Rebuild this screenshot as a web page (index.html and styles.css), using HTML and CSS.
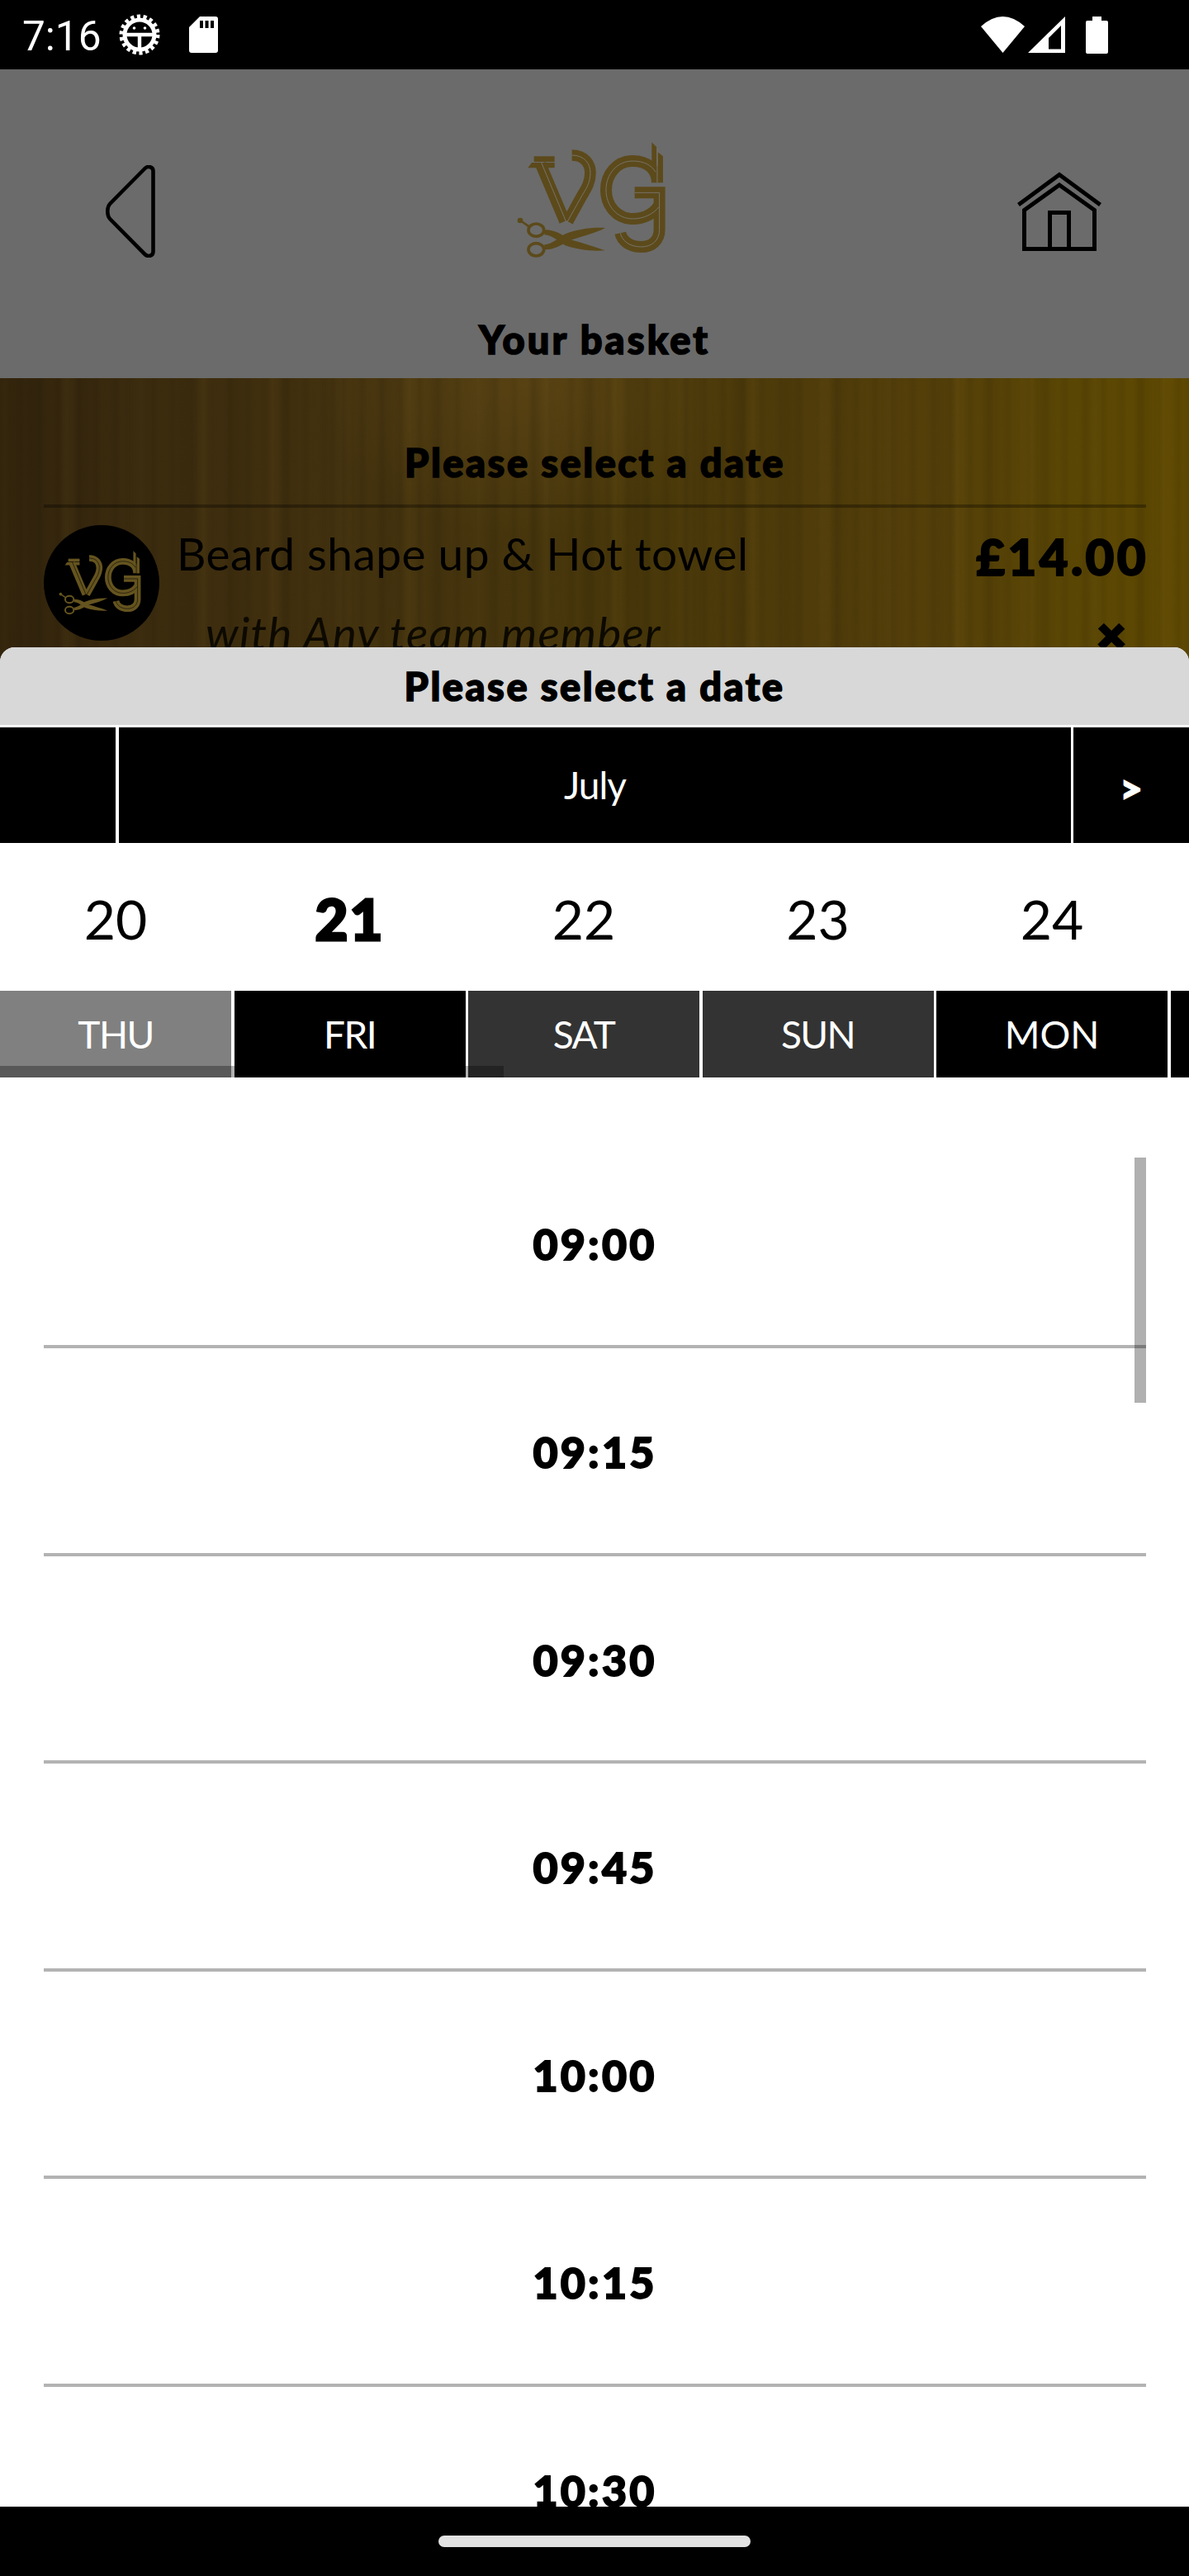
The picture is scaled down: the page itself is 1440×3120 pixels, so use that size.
FILE: index.html
```
<!DOCTYPE html>
<html lang="en">
<head>
    <meta charset="UTF-8">
    <meta name="viewport" content="width=device-width, initial-scale=1.0">
    <title>Your basket</title>
    <link rel="stylesheet" href="styles.css">
</head>
<body>
    <!-- shared logo artwork -->
    <svg class="defs" width="0" height="0">
        <symbol id="logo" viewBox="190 90 580 440">
            <g fill="currentColor">
                <path d="M258 148H333V168H258Z"/>
                <path d="M250 171H333V190H236Z"/>
                <path d="M686 97L704 115V215L686 195Z"/>
                <path d="M708 133L727 148V243H708Z"/>
                <path d="M296 469C325 468 345 445 372 430C415 413 470 405 517 408C480 428 430 440 388 453C355 472 330 488 296 487Z"/>
                <path d="M296 433C325 434 345 457 372 472C415 487 470 494 517 490C480 476 430 462 388 449C355 430 330 414 296 415Z"/>
                <circle cx="208" cy="381" r="10"/>
            </g>
            <g fill="none" stroke="currentColor">
                <path stroke-width="41" d="M282 176L370 384M396 144C442 144 463 175 463 208C463 245 445 270 433 290L381 385"/>
                <path stroke-width="42" d="M706 244C706 195 670 165 617 165C560 165 520 212 520 270C520 328 560 375 617 375C658 375 692 357 712 328"/>
                <path stroke-width="42" d="M624 280H714V415C714 452 688 477 648 477C606 477 578 455 572 427"/>
                <ellipse cx="266" cy="416" rx="28" ry="23" stroke-width="11"/>
                <ellipse cx="266" cy="487" rx="28" ry="23" stroke-width="11"/>
                <path stroke-width="8" d="M208 381L240 403"/>
            </g>
            <g class="inline" fill="none" stroke-width="3">
                <path d="M285 171L375 386M396 144C442 144 463 175 463 208C463 245 445 270 433 290L378 388"/>
                <path d="M706 115V244M700 205C684 178 655 165 617 165C560 165 520 212 520 270C520 328 560 375 617 375C658 375 692 357 712 332"/>
                <path d="M624 280H714V415C714 452 688 477 648 477C606 477 578 455 572 427"/>
            </g>
        </symbol>
    </svg>

    <div class="phone">
        <div class="status-bar">
            <div class="status-left">
                <span class="clock">7:16</span>
                <svg class="gear" viewBox="0 0 50 50">
                    <circle cx="25" cy="25" r="18" fill="none" stroke="#fff" stroke-width="5"/>
                    <circle cx="25" cy="25" r="22" fill="none" stroke="#fff" stroke-width="5" stroke-dasharray="4.2 3.48"/>
                    <path d="M9 25H41M25 25V42" stroke="#fff" stroke-width="4.4"/>
                    <circle cx="18.5" cy="17" r="1.8" fill="#fff"/>
                    <circle cx="31.5" cy="17" r="1.8" fill="#fff"/>
                </svg>
                <svg class="sd" viewBox="0 0 35 44">
                    <path fill="#fff" d="M13 0H32Q35 0 35 3V41Q35 44 32 44H3Q0 44 0 41V13Z"/>
                    <path d="M13 5h4v9h-4zM19.5 5h4v9h-4zM26 5h4v9h-4z"/>
                </svg>
            </div>
            <div class="status-right">
                <svg class="wifi" viewBox="0 0 53 44"><path fill="#fff" d="M0 12Q26.500 -12 53 12L26.500 44Z"/></svg>
                <svg class="signal" viewBox="0 0 45 44"><path fill="#fff" fill-rule="evenodd" d="M45 0V44H0ZM40 11L25 26V39.500H40Z"/></svg>
                <svg class="battery" viewBox="0 0 27 45"><path fill="#fff" d="M8 0H19V5H25Q27 5 27 7V43Q27 45 25 45H2Q0 45 0 43V7Q0 5 2 5H8Z"/></svg>
            </div>
        </div>

        <div class="header">
            <div class="header-row">
                <svg class="back" viewBox="0 0 60 112">
                    <path fill="none" stroke="#000" stroke-width="4.600" d="M57.500 7V105C57.500 110 51 111.500 47.500 108L5.500 65.500C1.200 61 1.200 51 5.500 46.500L47.500 4C51 0.500 57.500 2 57.500 7Z"/>
                </svg>
                <svg class="logo"><use href="#logo"/></svg>
                <svg class="home" viewBox="0 0 104 96">
                    <g fill="none" stroke="#000" stroke-width="5">
                        <path d="M2.500 40L52 3.500L101.500 40"/>
                        <path d="M9.500 93.500V46.500L52 16L94.500 46.500V93.500Z"/>
                        <path d="M40.500 93V49.500H63.500V93"/>
                    </g>
                </svg>
            </div>
            <h1>Your basket</h1>
        </div>

        <div class="basket">
            <h2>Please select a date</h2>
            <div class="item">
                <div class="avatar"><svg><use href="#logo"/></svg></div>
                <div class="item-text">
                    <div class="service">Beard shape up &amp; Hot towel</div>
                    <div class="staff">with Any team member</div>
                </div>
                <div class="item-side">
                    <div class="price">£14.00</div>
                    <div class="remove">×</div>
                </div>
            </div>
        </div>

        <div class="sheet">
            <div class="sheet-title">Please select a date</div>
            <div class="months">
                <div class="prev"></div>
                <div class="month">July</div>
                <div class="next">&gt;</div>
            </div>
            <div class="days">
                <div class="day past"><div class="num">20</div><div class="name">THU</div></div>
                <div class="day selected"><div class="num">21</div><div class="name">FRI</div></div>
                <div class="day weekend"><div class="num">22</div><div class="name">SAT</div></div>
                <div class="day weekend"><div class="num">23</div><div class="name">SUN</div></div>
                <div class="day"><div class="num">24</div><div class="name mon">MON</div></div>
                <div class="day"><div class="num"></div><div class="name"></div></div>
                <div class="scroll-x"></div>
            </div>
            <div class="times">
                <div class="time">09:00</div>
                <div class="time">09:15</div>
                <div class="time">09:30</div>
                <div class="time">09:45</div>
                <div class="time">10:00</div>
                <div class="time">10:15</div>
                <div class="time">10:30</div>
                <div class="scroll-y"></div>
            </div>
        </div>

        <div class="nav-bar"><div class="pill"></div></div>
    </div>
</body>
</html>
```
FILE: styles.css
```
* {
    box-sizing: border-box;
}
body {
    margin: 0;
    background-color: #000;
    font-family: Lato, "Liberation Sans", sans-serif;
    color: #000;
}
svg {
    display: block;
}
.defs {
    position: absolute;
}
.phone {
    width: 1440px;
    height: 3120px;
    display: flex;
    flex-direction: column;
    overflow: hidden;
}

/* status bar */
.status-bar {
    height: 84px;
    background-color: #000;
    display: flex;
    justify-content: space-between;
    padding: 0 98px 0 27px;
    flex-shrink: 0;
}
.status-left, .status-right {
    display: flex;
    align-items: center;
}
.clock {
    color: #fff;
    font-family: Roboto, sans-serif;
    font-size: 49.5px;
    line-height: 84px;
    width: 117px;
    padding-top: 3px;
}
.gear {
    width: 50px;
    height: 50px;
}
.sd {
    width: 35px;
    height: 44px;
    margin-left: 35px;
}
.wifi {
    width: 53px;
    height: 44px;
}
.signal {
    width: 45px;
    height: 44px;
    margin-left: 4px;
}
.battery {
    width: 27px;
    height: 45px;
    margin-left: 25px;
}

/* header */
.header {
    height: 374px;
    padding-top: 86px;
    background-color: #6b6b6b;
    flex-shrink: 0;
}
.header-row {
    display: flex;
    justify-content: space-between;
    align-items: center;
    height: 172px;
    padding: 0 105px 0 128px;
}
.back {
    width: 60px;
    height: 112px;
}
.logo {
    width: 193.3px;
    height: 146.7px;
    margin: 0 0 25px 22px;
    color: #5c4a1b;
    --line: #787367;
}
.inline {
    stroke: var(--line);
}
.home {
    width: 104px;
    height: 96px;
}
h1, h2, .sheet-title {
    margin: 0;
    font-size: 47px;
    font-weight: 900;
    text-align: center;
    letter-spacing: 2.5px;
    -webkit-text-stroke: 1.6px #000;
}
h1 {
    margin-top: 41px;
    letter-spacing: 3.1px;
}

/* basket behind the sheet */
.basket {
    height: 344px;
    flex-shrink: 0;
    padding: 0 52px 0 53px;
    overflow: hidden;
    background:
        repeating-linear-gradient(90deg, rgba(0,0,0,0.05) 0 3px, transparent 8px 17px, rgba(0,0,0,0.04) 23px),
        repeating-linear-gradient(90deg, transparent 0 29px, rgba(0,0,0,0.05) 36px 40px, transparent 61px),
        repeating-linear-gradient(90deg, rgba(255,200,80,0.02) 0 5px, transparent 12px 71px, rgba(255,200,80,0.03) 80px 83px),
        radial-gradient(ellipse 260px 190px at 640px 0, rgba(106,78,26,0.5), transparent),
        linear-gradient(90deg, #32240c 0%, #3b2b0e 12%, #42310e 28%, #47360c 45%, #493809 55%, #4e3b0a 65%, #543f09 78%, #5a4604 90%, #5f4902 100%);
}
h2 {
    height: 157px;
    line-height: 204px;
    border-bottom: 4px solid rgba(0,0,0,0.3);
}
.item {
    display: flex;
    padding-top: 21px;
}
.avatar {
    width: 140px;
    height: 140px;
    border-radius: 50%;
    background-color: #000;
    display: flex;
    align-items: center;
    justify-content: center;
}
.avatar svg {
    width: 107px;
    height: 81px;
    color: #65541f;
    --line: #000;
}
.item-text {
    flex: 1;
    padding-left: 21px;
    white-space: nowrap;
}
.service, .staff {
    font-size: 55px;
    line-height: 96px;
}
.service {
    margin-top: -14px;
    letter-spacing: 0.45px;
}
.staff {
    font-style: italic;
    padding-left: 35px;
    letter-spacing: 1.1px;
    color: #0c0900;
}
.item-side {
    font-weight: 900;
    text-align: right;
}
.price {
    margin-top: -2px;
    font-size: 60px;
    line-height: 80px;
    letter-spacing: 3.4px;
    margin-right: -3px;
    -webkit-text-stroke: 2px #000;
}
.remove {
    padding: 14px 25px 0 0;
    font-size: 58px;
    line-height: 80px;
    -webkit-text-stroke: 4px #000;
}

/* date picker sheet, overlaps the basket so its corners show through */
.sheet {
    flex: 1;
    min-height: 0;
    margin-top: -18px;
    position: relative;
    overflow: hidden;
    background-color: #fff;
    display: flex;
    flex-direction: column;
    border-radius: 18px 18px 0 0;
}
.sheet-title {
    height: 97px;
    line-height: 94px;
    background-color: #d8d8d8;
    border-bottom: 3px solid #fff;
    flex-shrink: 0;
}
.months {
    display: flex;
    height: 140px;
    flex-shrink: 0;
    color: #fff;
    text-align: center;
    line-height: 140px;
}
.months div {
    background-color: #000;
}
.prev {
    width: 140px;
    margin-right: 4px;
}
.month {
    flex: 1;
    font-size: 46px;
    letter-spacing: -1px;
}
.next {
    width: 140px;
    margin-left: 3px;
    padding-top: 4px;
    font-size: 46px;
    font-weight: 900;
    -webkit-text-stroke: 2px #fff;
}
.days {
    position: relative;
    display: flex;
    gap: 3.5px;
    height: 284px;
    overflow: hidden;
    flex-shrink: 0;
}
.day {
    width: 280px;
    flex-shrink: 0;
    text-align: center;
}
.num {
    height: 179px;
    line-height: 183px;
    font-size: 66px;
}
.name {
    height: 105px;
    line-height: 105px;
    font-size: 46px;
    letter-spacing: -1.6px;
    color: #fff;
    background-color: #000;
}
.mon {
    letter-spacing: 0;
}
.past .name {
    background-color: #808080;
}
.weekend .name {
    background-color: #333;
}
.selected .num {
    font-size: 69px;
    font-weight: 900;
    letter-spacing: 2px;
    -webkit-text-stroke: 3px #000;
}
.scroll-x, .scroll-y {
    position: absolute;
    background-color: rgba(0,0,0,0.31);
}
.scroll-x {
    left: 0;
    bottom: 0;
    width: 610px;
    height: 14px;
}
.times {
    position: relative;
    flex: 1;
    padding: 76.4px 52px 0 53px;
    overflow: hidden;
}
.time {
    height: 251.6px;
    line-height: 250px;
    border-bottom: 4px solid #b3b3b3;
    text-align: center;
    font-size: 52px;
    font-weight: 900;
    letter-spacing: 3.2px;
    -webkit-text-stroke: 1.8px #000;
}
.scroll-y {
    right: 52px;
    top: 97px;
    width: 14px;
    height: 297px;
}

/* gesture bar */
.nav-bar {
    height: 84px;
    flex-shrink: 0;
    background-color: #000;
    display: flex;
    align-items: center;
    justify-content: center;
}
.pill {
    width: 378px;
    height: 14px;
    border-radius: 7px;
    background-color: #e2e2e2;
}
```
